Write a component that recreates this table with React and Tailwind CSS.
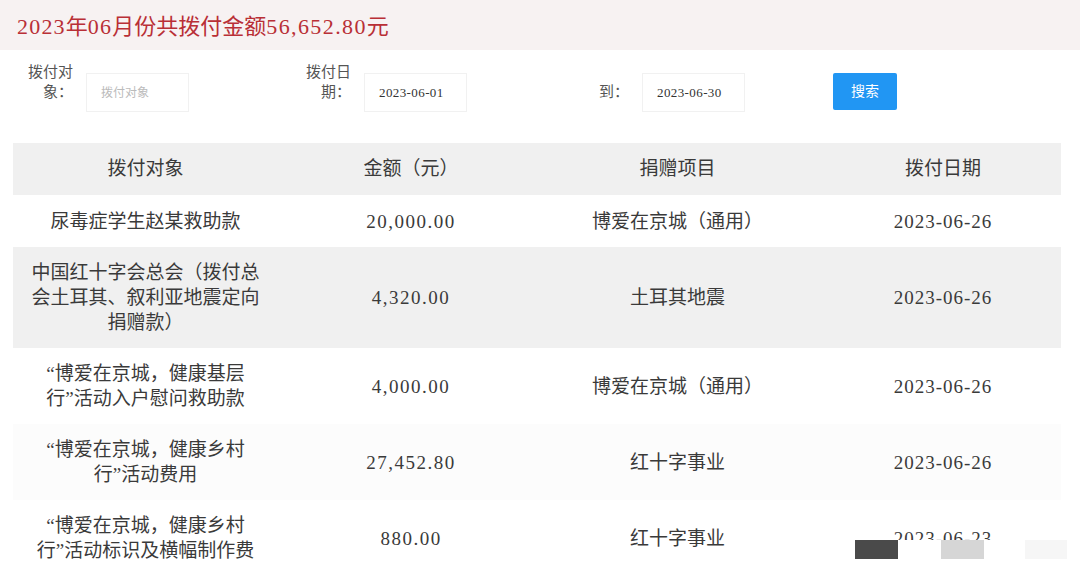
const rows = [
  {
    target: ['尿毒症学生赵某救助款'],
    amount: '20,000.00',
    project: '博爱在京城（通用）',
    date: '2023-06-26',
    bg: 'bg-white',
  },
  {
    target: ['中国红十字会总会（拨付总', '会土耳其、叙利亚地震定向', '捐赠款）'],
    amount: '4,320.00',
    project: '土耳其地震',
    date: '2023-06-26',
    bg: 'bg-[#f0f0f0]',
  },
  {
    target: ['“博爱在京城，健康基层', '行”活动入户慰问救助款'],
    amount: '4,000.00',
    project: '博爱在京城（通用）',
    date: '2023-06-26',
    bg: 'bg-white',
  },
  {
    target: ['“博爱在京城，健康乡村', '行”活动费用'],
    amount: '27,452.80',
    project: '红十字事业',
    date: '2023-06-26',
    bg: 'bg-[#fcfcfc]',
  },
  {
    target: ['“博爱在京城，健康乡村', '行”活动标识及横幅制作费'],
    amount: '880.00',
    project: '红十字事业',
    date: '2023-06-23',
    bg: 'bg-white',
    masked: true,
  },
];

const Field = ({ label, value, placeholder }) => (
  <div className="w-[278px] flex items-end">
    <div className="w-[46px] text-right text-[15px] leading-[20px] text-[#555] mb-[10px]">
      {label}
    </div>
    <div className="ml-[13px] w-[103px] h-[39px] border border-[#f1f1f1] flex items-center pl-[14px] text-[13px]">
      {value ? (
        <span className="text-[#333] tracking-[0.4px]">{value}</span>
      ) : (
        <span className="text-[#bbb] text-[12px]">{placeholder}</span>
      )}
    </div>
  </div>
);

const App = () => {
  return (
    <div className="w-[1080px] h-[582px] overflow-hidden bg-white font-['Liberation_Serif','Noto_Sans_CJK_SC',serif]">
      {/* Title band */}
      <div className="h-[50px] bg-[#f7f2f2] pl-[17px] pt-[12px]">
        <h1 className="text-[22px] leading-[30px] text-[#b92f36]">
          <span className="tracking-[1.2px]">2023</span>年<span className="tracking-[1.2px]">06</span>月份共拨付金额<span className="tracking-[1.4px]">56,652.80</span>元
        </h1>
      </div>

      {/* Filters */}
      <div className="flex items-end pl-[27px] pt-[12px] h-[62px]">
        <Field label={<>拨付对<br />象：</>} placeholder="拨付对象" />
        <Field label={<>拨付日<br />期：</>} value="2023-06-01" />
        <Field label="到：" value="2023-06-30" />
        <button className="-ml-[28px] w-[64px] h-[37px] mb-[2px] rounded-[2px] bg-[#2196f3] text-white text-[14px]">
          搜索
        </button>
      </div>

      {/* Table */}
      <div className="ml-[13px] mt-[31px] w-[1048px] text-[19px] text-[#3a3a3a]">
        <div className="grid grid-cols-[265px_266px_267px_250px] h-[52px] items-center bg-[#f0f0f0] text-center">
          <div>拨付对象</div>
          <div>金额（元）</div>
          <div>捐赠项目</div>
          <div className="pl-[14px]">拨付日期</div>
        </div>
        {rows.map((r, i) => (
          <div
            key={i}
            className={`grid grid-cols-[265px_266px_267px_250px] min-h-[52px] items-center text-center leading-[25px] py-[13px] ${r.bg}`}
          >
            <div className="px-[10px]">
              {r.target.map((t, j) => (
                <div key={j} className="whitespace-nowrap">{t}</div>
              ))}
            </div>
            <div className="tracking-[1.5px]">{r.amount}</div>
            <div>{r.project}</div>
            <div className="pl-[14px] relative tracking-[1px]">
              {r.date}
              {r.masked && (
                <div className="absolute left-[44px] right-[-14px] top-[14px] h-[19px] bg-white flex">
                  <div className="w-[43px] h-full bg-[#4a4a4a]" />
                  <div className="ml-[43px] w-[43px] h-full bg-[#d6d6d6]" />
                  <div className="ml-[41px] w-[42px] h-full bg-[#f6f6f6]" />
                </div>
              )}
            </div>
          </div>
        ))}
      </div>
    </div>
  );
};

export default App;
